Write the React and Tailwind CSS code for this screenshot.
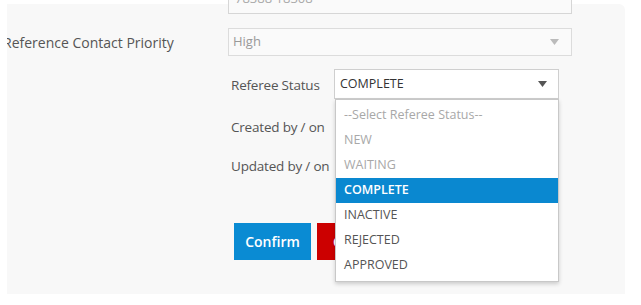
const options = [
  { label: '--Select Referee Status--', muted: true },
  { label: 'NEW', muted: true },
  { label: 'WAITING', muted: true },
  { label: 'COMPLETE', active: true },
  { label: 'INACTIVE' },
  { label: 'REJECTED' },
  { label: 'APPROVED' },
]

function Caret({ className }) {
  return (
    <svg width="9" height="6" viewBox="0 0 9 6" className={className}>
      <path d="M0 0 L9 0 L4.5 6 Z" fill="currentColor" />
    </svg>
  )
}

export default function App() {
  return (
    <div className="h-[305px] w-[641px] bg-white pt-[4px] font-['Open_Sans',sans-serif] text-[#555]">
      <div className="relative ml-[7px] flow-root h-[290px] w-[618px] overflow-x-clip rounded-tr-md bg-[#f8f8f8]">
        {/* phone input, scrolled mostly out of view */}
        <div className="-mt-[20px] ml-[221px] flex h-[30px] w-[344px] items-end border border-[#d6d6d6] bg-[#fafafa] px-[6px] pb-[8px] text-[13px] leading-none text-[#aaa]">
          78388 18308
        </div>

        <div className="mt-[14px] flex h-[28px] items-center">
          <div className="-ml-[4px] w-[225px] shrink-0 text-[14px]">Reference Contact Priority</div>
          <div className="flex h-[28px] w-[344px] items-center justify-between border border-[#dcdcdc] bg-[#fafafa] pl-[4px] pr-[12px] text-[13px] text-[#999]">
            <span>High</span>
            <Caret className="text-[#bbb]" />
          </div>
        </div>

        <div className="pl-[224px]">
          <div className="mt-[13px] flex h-[30px] items-center">
            <div className="mt-[3px] w-[103px] shrink-0 text-[13.5px] tracking-[-0.2px]">Referee Status</div>
            <div className="flex h-[30px] w-[225px] items-center justify-between border border-[#cfcfcf] bg-white pl-[5px] pr-[11px] text-[12.5px] text-[#333]">
              <span>COMPLETE</span>
              <Caret className="text-[#555]" />
            </div>
          </div>

          <div className="mt-[18px] h-[20px] text-[13.5px] leading-[20px] tracking-[-0.2px]">Created by / on</div>
          <div className="mt-[19px] h-[20px] text-[13.5px] leading-[20px] tracking-[-0.2px]">Updated by / on</div>

          <div className="ml-[3px] mt-[47px] flex gap-[6px]">
            <button
              type="button"
              className="h-[37px] w-[77px] bg-[#0a8bd3] text-[14px] font-semibold text-white"
            >
              Confirm
            </button>
            <button
              type="button"
              className="h-[37px] w-[77px] bg-[#cc0000] text-[14px] font-semibold text-white"
            >
              Cancel
            </button>
          </div>
        </div>

        <div className="absolute left-[328px] top-[95px] h-[183px] w-[224px] border border-[#c8c8c8] bg-white pt-[3px] shadow-[0_2px_4px_rgba(0,0,0,0.18)]">
          {options.map((o) => (
            <div
              key={o.label}
              className={
                o.active
                  ? 'flex h-[25px] items-center bg-[#0a88d0] pl-[8px] text-[12.5px] font-semibold text-white'
                  : o.muted
                    ? 'flex h-[25px] items-center pl-[8px] text-[12.5px] text-[#a8a8a8]'
                    : 'flex h-[25px] items-center pl-[8px] text-[12.5px] text-[#555]'
              }
            >
              {o.label}
            </div>
          ))}
        </div>
      </div>
    </div>
  )
}
